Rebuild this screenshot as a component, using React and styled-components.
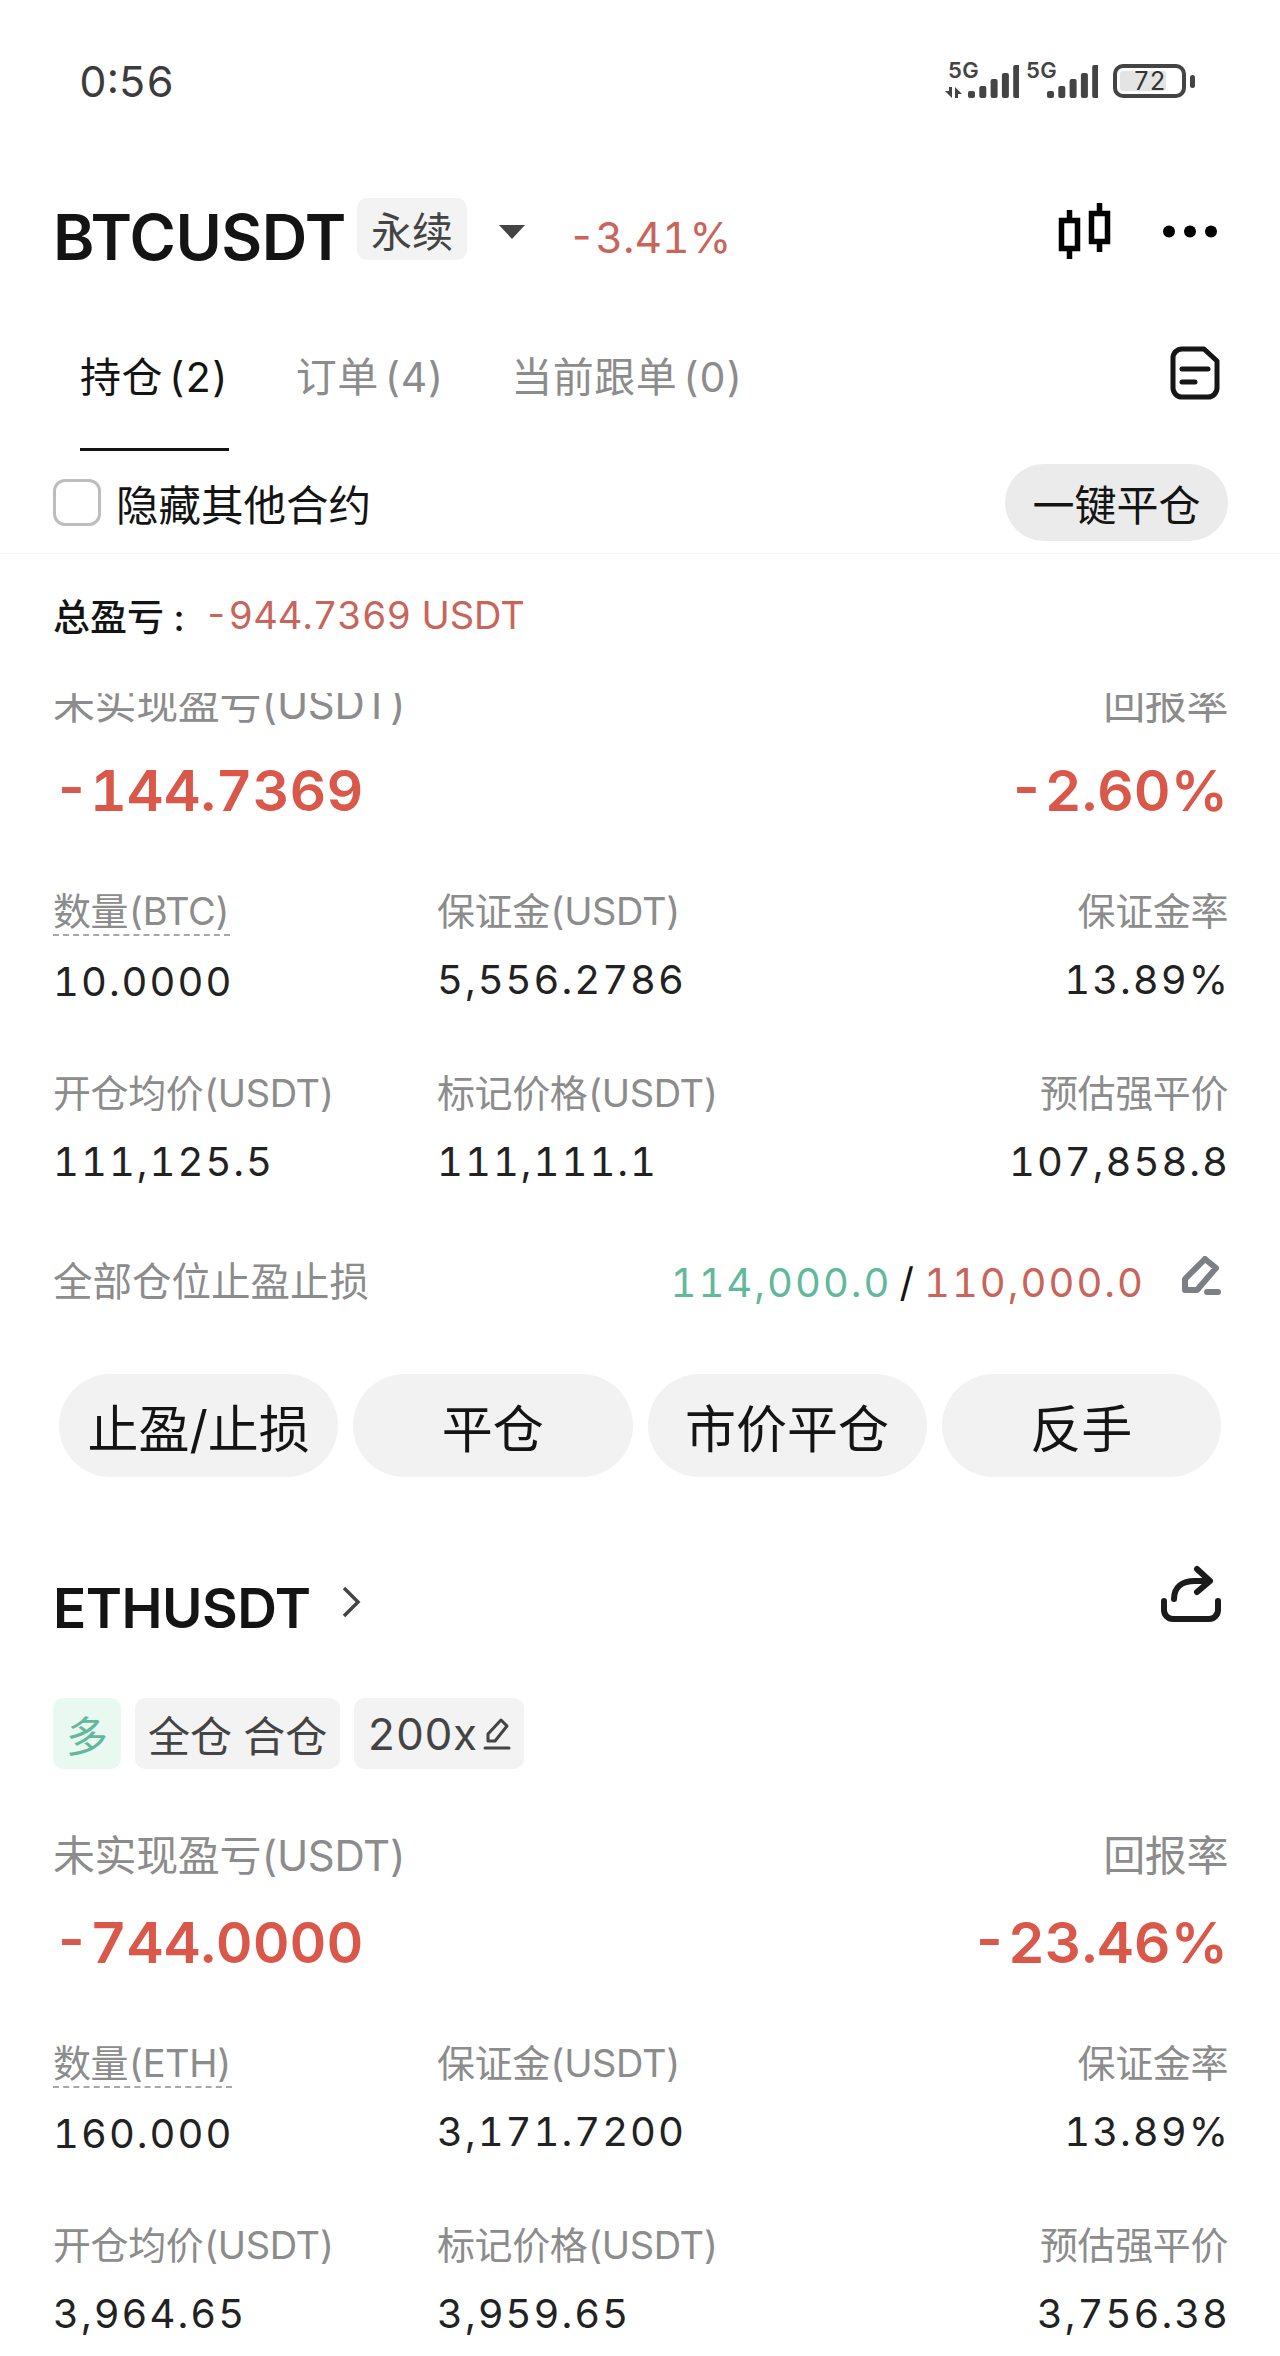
import React from 'react';
import styled, { createGlobalStyle } from 'styled-components';

const GlobalStyle = createGlobalStyle`
  html, body {
    margin: 0;
    padding: 0;
    background: #fff;
  }
  * {
    box-sizing: border-box;
  }
`;

const RED = '#d9584a';
const SOFT_RED = '#c9645a';
const GREEN = '#62b89a';
const GREY = '#8c8c8c';
const INK = '#141414';

const Page = styled.div`
  width: 1280px;
  height: 2356px;
  overflow: hidden;
  display: flex;
  flex-direction: column;
  background: #fff;
  color: ${INK};
  font-family: Inter, "Noto Sans CJK SC", sans-serif;
  font-variant-numeric: tabular-nums;
`;

const StatusBar = styled.div`
  height: 162px;
  flex: none;
  display: flex;
  align-items: center;
  justify-content: space-between;
  padding: 0 85px 0 79px;
`;

const Clock = styled.div`
  font-size: 43px;
  color: #3c3c3c;
`;

const StatusIcons = styled.div`
  display: flex;
  align-items: center;
  gap: 7px;
`;

const SignalSvg = styled.svg`
  margin-bottom: 10px;
`;

const Battery = styled.div`
  position: relative;
  width: 73px;
  height: 34px;
  border: 4px solid #444;
  border-radius: 10px;
  margin: 0 9px 0 8px;
  display: flex;
  align-items: center;
  justify-content: center;
  font-size: 25px;
  color: #333;

  &::before {
    content: '';
    position: absolute;
    left: 3px;
    top: 3px;
    bottom: 3px;
    width: 46px;
    background: #e4e4e4;
    border-radius: 3px;
  }

  &::after {
    content: '';
    position: absolute;
    right: -13px;
    top: 7px;
    width: 5px;
    height: 13px;
    background: #444;
    border-radius: 3px;
  }
`;

const BatteryText = styled.span`
  position: relative;
`;

const Header = styled.div`
  height: 90px;
  margin-top: 30px;
  flex: none;
  display: flex;
  align-items: center;
  padding: 0 63px 0 53px;
`;

const Symbol = styled.div`
  font-size: ${(p) => p.$size}px;
  font-weight: 600;
  letter-spacing: -0.5px;
  color: ${INK};
`;

const PerpBadge = styled.div`
  width: 110px;
  height: 62px;
  margin: -17px 0 0 11px;
  background: #f3f3f3;
  border-radius: 10px;
  display: flex;
  align-items: center;
  justify-content: center;
  font-size: 41px;
  color: #444;
`;

const Caret = styled.div`
  width: 0;
  height: 0;
  margin: -10px 0 0 32px;
  border-left: 13px solid transparent;
  border-right: 13px solid transparent;
  border-top: 14px solid #444;
`;

const Change = styled.div`
  margin-left: 43px;
  font-size: 42.5px;
  color: ${SOFT_RED};
`;

const HeaderIcons = styled.div`
  margin: -12px 0 0 auto;
  display: flex;
  align-items: center;
  gap: 51px;
`;

const Tabs = styled.div`
  margin-top: 70px;
  flex: none;
  display: flex;
  align-items: flex-start;
  padding: 0 60px 0 80px;
`;

const Tab = styled.div`
  height: 99px;
  line-height: 50px;
  margin-right: 67px;
  font-size: 41px;
  letter-spacing: 0.5px;
  word-spacing: -6px;
  color: ${(p) => (p.$active ? INK : GREY)};
  border-bottom: 3px solid ${(p) => (p.$active ? INK : 'transparent')};
`;

const TabIcon = styled.div`
  margin: -6px 0 0 auto;
`;

const FilterRow = styled.div`
  flex: none;
  display: flex;
  align-items: center;
  padding: 13px 52px 12px 53px;
  border-bottom: 1px solid #f3f3f3;
`;

const CheckBox = styled.div`
  width: 48px;
  height: 47px;
  border: 3px solid #bdbdbd;
  border-radius: 12px;
`;

const FilterLabel = styled.div`
  margin-left: 15px;
  font-size: 42.5px;
`;

const CloseAll = styled.div`
  margin-left: auto;
  width: 223px;
  height: 77px;
  border-radius: 39px;
  background: #ebebeb;
  display: flex;
  align-items: center;
  justify-content: center;
  font-size: 42px;
`;

const Summary = styled.div`
  flex: none;
  height: 50px;
  margin-top: 36px;
  padding: 0 53px;
  display: flex;
  align-items: center;
  font-size: 37px;
  font-weight: 500;
`;

const SummaryValue = styled.span`
  margin-left: 20px;
  font-size: 38px;
  font-weight: 400;
  color: ${SOFT_RED};
`;

const Scroller = styled.div`
  margin-top: 53px;
  flex: 1;
  min-height: 0;
  overflow: hidden;
`;

const ScrollContent = styled.div`
  margin-top: -12px;
`;

const Card = styled.div`
  padding: 0 52px 93px 53px;
`;

const CardHeader = styled.div`
  height: 76px;
  display: flex;
  align-items: center;
`;

const Chevron = styled.svg`
  margin: -12px 0 0 30px;
`;

const ShareIcon = styled.svg`
  margin: -28px 7px 0 auto;
`;

const TagRow = styled.div`
  margin-top: 52px;
  display: flex;
  gap: 14px;
`;

const Tag = styled.div`
  height: 71px;
  padding: 0 13px;
  border-radius: 10px;
  display: flex;
  align-items: center;
  gap: 6px;
  font-size: ${(p) => p.$size || 42}px;
  color: ${(p) => (p.$long ? GREEN : '#444')};
  background: ${(p) => (p.$long ? '#eaf8f2' : '#f3f3f3')};
`;

const PnlBlock = styled.div`
  margin-top: ${(p) => (p.$first ? 0 : 64)}px;
  display: grid;
  grid-template-columns: 1fr auto;
  row-gap: 29px;
`;

const PnlLabel = styled.div`
  line-height: 46px;
  font-size: 42px;
  letter-spacing: -0.4px;
  color: ${GREY};
  text-align: ${(p) => (p.$right ? 'right' : 'left')};
`;

const Label = styled.div`
  line-height: 46px;
  font-size: 38px;
  letter-spacing: -0.4px;
  color: ${GREY};
`;

const DottedLabel = styled(Label)`
  justify-self: start;
  border-bottom: 2px dashed #a8a8a8;
  height: 48px;
`;

const TriggerLabel = styled(Label)`
  font-size: 39.5px;
  letter-spacing: 0;
`;

const BigValue = styled.div`
  line-height: 70px;
  font-size: 57px;
  font-weight: 600;
  color: ${RED};
  text-align: ${(p) => (p.$right ? 'right' : 'left')};
`;

const StatGrid = styled.div`
  margin-top: 62px;
  display: grid;
  grid-template-columns: 384px 1fr auto;
  row-gap: 63px;
`;

const Stat = styled.div`
  display: flex;
  flex-direction: column;
  gap: 21px;
  align-items: ${(p) => (p.$right ? 'flex-end' : 'flex-start')};
`;

const Value = styled.div`
  line-height: 50px;
  margin-right: -2px;
  font-size: 40px;
  letter-spacing: 2px;
  color: #222;
`;

const TriggerRow = styled.div`
  margin-top: 70px;
  height: 50px;
  display: flex;
  align-items: center;
`;

const TriggerPrices = styled.div`
  margin-left: auto;
  display: flex;
  align-items: center;
  font-size: 40px;
  letter-spacing: 2px;
  margin-right: 36px;
`;

const Price = styled.span`
  color: ${(p) => p.$color};
`;

const Slash = styled.span`
  margin: 0 8px;
  color: ${INK};
`;

const EditWrap = styled.div`
  margin: -12px 7px 0 0;
  display: flex;
`;

const Actions = styled.div`
  margin: 67px 7px 0 6px;
  display: grid;
  grid-template-columns: repeat(4, 1fr);
  gap: 15px;
`;

const ActionButton = styled.div`
  height: 103px;
  border-radius: 52px;
  background: #f2f2f2;
  display: flex;
  align-items: center;
  justify-content: center;
  font-size: 51px;
`;

function SignalIcon({ width, arrows }) {
  const start = width - 51;
  const bars = [7, 12, 19, 25, 33];
  return (
    <SignalSvg width={width} height="44" viewBox={`0 0 ${width} 44`}>
      <text x={arrows ? 3 : 0} y="24" fontSize="22" fontWeight="600" fontFamily="Inter" fill="#444">5G</text>
      {arrows && <path d="M7 33v11L0 37h4v-4zM10 44V33l7 7h-4v4z" fill="#444" />}
      {bars.map((h, i) => (
        <rect key={i} x={start + i * 11.3} y={44 - h} width="7" height={h} rx="2" fill="#444" />
      ))}
    </SignalSvg>
  );
}

function CandleIcon() {
  return (
    <svg width="54" height="56" viewBox="0 0 54 56" fill="none" stroke="#000" strokeWidth="5.500">
      <rect x="3.500" y="17.500" width="16" height="28" />
      <path d="M11.500 7v10M11.500 46v10" />
      <rect x="33.500" y="10.500" width="16" height="28" />
      <path d="M41.500 0v10M41.500 39v10" />
    </svg>
  );
}

function DotsIcon() {
  return (
    <svg width="54" height="13" viewBox="0 0 54 13" fill="#000">
      <circle cx="6" cy="6.500" r="6" />
      <circle cx="27" cy="6.500" r="6" />
      <circle cx="48" cy="6.500" r="6" />
    </svg>
  );
}

function DocIcon() {
  return (
    <svg width="50" height="54" viewBox="0 0 50 54" fill="none" stroke="#161616" strokeWidth="5" strokeLinecap="round" strokeLinejoin="round">
      <path d="M12 3h22l13 12v27a9 9 0 0 1-9 9H12a9 9 0 0 1-9-9V12a9 9 0 0 1 9-9z" />
      <path d="M12 23h26M12 36h13" />
    </svg>
  );
}

function PencilIcon() {
  return (
    <svg width="40" height="40" viewBox="0 0 40 40" fill="none" stroke="#7d7f87" strokeWidth="6" strokeLinecap="round" strokeLinejoin="round">
      <path d="M24 3l11 9-19 22H4V23z" />
      <path d="M26 36h11" />
    </svg>
  );
}

function TagPencilIcon() {
  return (
    <svg width="28" height="34" viewBox="0 0 28 34" fill="none" stroke="#444" strokeWidth="3" strokeLinecap="round" strokeLinejoin="round">
      <path d="M5 24v-7L18 3l6 6-12 15z" />
      <path d="M2 31h24" />
    </svg>
  );
}

function PositionCard({ symbol, pnl, roe, qtyLabel, stats, trigger }) {
  return (
    <Card>
      {symbol && (
        <>
          <CardHeader>
            <Symbol $size={55}>{symbol}</Symbol>
            <Chevron width="20" height="32" viewBox="0 0 20 32" fill="none" stroke="#444" strokeWidth="3.500">
              <path d="M3 2l14 14L3 30" />
            </Chevron>
            <ShareIcon width="60" height="58" viewBox="0 0 60 58" fill="none" stroke="#1b1b1b" strokeWidth="6" strokeLinecap="round" strokeLinejoin="round">
              <path d="M13 34c0-12 8-18 21-18h11M36 4l13 12-13 11" />
              <path d="M3 36v9a9 9 0 0 0 9 9h36a9 9 0 0 0 9-9v-9" />
            </ShareIcon>
          </CardHeader>
          <TagRow>
            <Tag $long>多</Tag>
            <Tag>全仓 合仓</Tag>
            <Tag $size={44}>
              200x
              <TagPencilIcon />
            </Tag>
          </TagRow>
        </>
      )}
      <PnlBlock $first={!symbol}>
        <PnlLabel>未实现盈亏(USDT)</PnlLabel>
        <PnlLabel $right>回报率</PnlLabel>
        <BigValue>{pnl}</BigValue>
        <BigValue $right>{roe}</BigValue>
      </PnlBlock>
      <StatGrid>
        <Stat>
          <DottedLabel>{qtyLabel}</DottedLabel>
          <Value>{stats[0]}</Value>
        </Stat>
        <Stat>
          <Label>保证金(USDT)</Label>
          <Value>{stats[1]}</Value>
        </Stat>
        <Stat $right>
          <Label>保证金率</Label>
          <Value>{stats[2]}</Value>
        </Stat>
        <Stat>
          <Label>开仓均价(USDT)</Label>
          <Value>{stats[3]}</Value>
        </Stat>
        <Stat>
          <Label>标记价格(USDT)</Label>
          <Value>{stats[4]}</Value>
        </Stat>
        <Stat $right>
          <Label>预估强平价</Label>
          <Value>{stats[5]}</Value>
        </Stat>
      </StatGrid>
      {trigger && (
        <>
          <TriggerRow>
            <TriggerLabel>全部仓位止盈止损</TriggerLabel>
            <TriggerPrices>
              <Price $color={GREEN}>114,000.0</Price>
              <Slash>/</Slash>
              <Price $color={SOFT_RED}>110,000.0</Price>
            </TriggerPrices>
            <EditWrap>
              <PencilIcon />
            </EditWrap>
          </TriggerRow>
          <Actions>
            <ActionButton>止盈/止损</ActionButton>
            <ActionButton>平仓</ActionButton>
            <ActionButton>市价平仓</ActionButton>
            <ActionButton>反手</ActionButton>
          </Actions>
        </>
      )}
    </Card>
  );
}

export default function App() {
  return (
    <Page>
      <GlobalStyle />
      <StatusBar>
        <Clock>0:56</Clock>
        <StatusIcons>
          <SignalIcon width={74} arrows />
          <SignalIcon width={72} />
          <Battery>
            <BatteryText>72</BatteryText>
          </Battery>
        </StatusIcons>
      </StatusBar>
      <Header>
        <Symbol $size={63}>BTCUSDT</Symbol>
        <PerpBadge>永续</PerpBadge>
        <Caret />
        <Change>-3.41%</Change>
        <HeaderIcons>
          <CandleIcon />
          <DotsIcon />
        </HeaderIcons>
      </Header>
      <Tabs>
        <Tab $active>持仓 (2)</Tab>
        <Tab>订单 (4)</Tab>
        <Tab>当前跟单 (0)</Tab>
        <TabIcon>
          <DocIcon />
        </TabIcon>
      </Tabs>
      <FilterRow>
        <CheckBox />
        <FilterLabel>隐藏其他合约</FilterLabel>
        <CloseAll>一键平仓</CloseAll>
      </FilterRow>
      <Summary>
        总盈亏 :
        <SummaryValue>-944.7369 USDT</SummaryValue>
      </Summary>
      <Scroller>
        <ScrollContent>
          <PositionCard
            pnl="-144.7369"
            roe="-2.60%"
            qtyLabel="数量(BTC)"
            stats={['10.0000', '5,556.2786', '13.89%', '111,125.5', '111,111.1', '107,858.8']}
            trigger
          />
          <PositionCard
            symbol="ETHUSDT"
            pnl="-744.0000"
            roe="-23.46%"
            qtyLabel="数量(ETH)"
            stats={['160.000', '3,171.7200', '13.89%', '3,964.65', '3,959.65', '3,756.38']}
          />
        </ScrollContent>
      </Scroller>
    </Page>
  );
}
